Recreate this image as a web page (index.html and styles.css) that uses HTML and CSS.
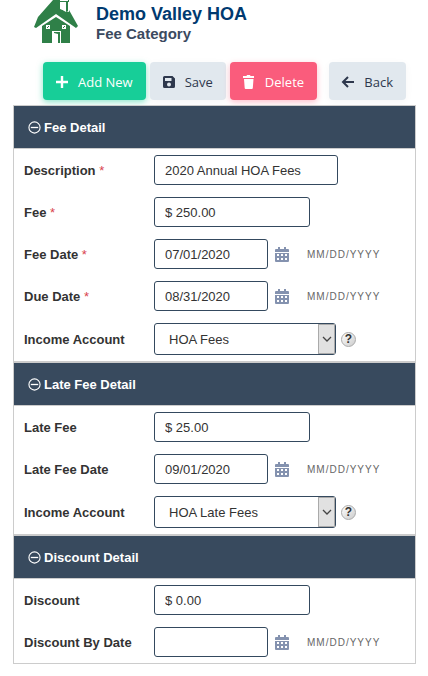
FILE: index.html
```html
<!DOCTYPE html>
<html lang="en">
<head>
    <meta charset="UTF-8">
    <meta name="viewport" content="width=device-width, initial-scale=1.0">
    <title>Fee Category - Demo Valley HOA</title>
    <link rel="stylesheet" href="styles.css">
</head>
<body>

    <!-- shared icons -->
    <svg class="sprite" aria-hidden="true">
        <symbol id="minus" viewBox="0 0 14 14">
            <circle cx="7" cy="7" r="6" fill="none" stroke="currentColor" stroke-width="1.2"/>
            <path d="M3 7h8" stroke="currentColor" stroke-width="1.4"/>
        </symbol>
        <symbol id="calendar" viewBox="0 0 14 15">
            <path fill="currentColor" fill-rule="evenodd" d="M3 0h2v2h4V0h2v2h2a1 1 0 0 1 1 1v2H0V3a1 1 0 0 1 1-1h2zM0 6h14v8a1 1 0 0 1-1 1H1a1 1 0 0 1-1-1zM2 7v2h2V7zM6 7v2h2V7zM10 7v2h2V7zM2 11v2h2v-2zM6 11v2h2v-2zM10 11v2h2v-2z"/>
        </symbol>
        <symbol id="chevron" viewBox="0 0 10 6">
            <path d="M1 1l4 4 4-4" fill="none" stroke="#444" stroke-width="1.3"/>
        </symbol>
    </svg>

    <header class="page-header">
        <svg class="logo" viewBox="0 0 44 43" aria-hidden="true">
            <path fill="#2f8048" d="M19 0h7v9l9 3V1h-1V0h1v10l9 16-2 2-20-14L2 28l-2-1 4-10z"/>
            <path fill="#fff" d="M27 2h5v10l-5-3z"/>
            <path fill="#2f8048" d="M26 1h9v1h-9zM32 1h2v10h-2zM22 17l14 9v17H27V31h-9v12H8V26z"/>
            <path fill="#fff" d="M12 25h4v4h-4zM28 25h4v4h-4zM18 31h9v12h-9z"/>
            <path fill="#2f8048" d="M20 32h6v11h-2v-9l-4-1zM14 26h1v1h-1zM13 27h1v1h-1zM30 26h1v1h-1zM29 27h1v1h-1z"/>
        </svg>
        <div>
            <h1>Demo Valley HOA</h1>
            <p>Fee Category</p>
        </div>
    </header>

    <div class="toolbar">
        <button type="button" class="btn btn-add">
            <svg viewBox="0 0 14 14"><path d="M7 1v12M1 7h12" stroke="currentColor" stroke-width="2.400"/></svg>
            Add New
        </button>
        <button type="button" class="btn">
            <svg viewBox="0 0 14 14"><path fill="currentColor" fill-rule="evenodd" d="M2.500 1h8L13 3.500v8a1.500 1.500 0 0 1-1.500 1.500h-9A1.500 1.500 0 0 1 1 11.500v-9A1.500 1.500 0 0 1 2.500 1zM3 3v3h6.500V3zM7 7.500a2 2 0 1 0 0 4 2 2 0 0 0 0-4z"/></svg>
            Save
        </button>
        <button type="button" class="btn btn-delete">
            <svg viewBox="0 0 14 14"><path fill="currentColor" d="M1 1h3.500l.5-1h3l.5 1H12v2H1zM2 4h9.500l-.7 9a1 1 0 0 1-1 1H3.700a1 1 0 0 1-1-1z"/></svg>
            Delete
        </button>
        <button type="button" class="btn btn-back">
            <svg viewBox="0 0 14 14"><path d="M7 2L2 7l5 5M2 7h11" fill="none" stroke="currentColor" stroke-width="2"/></svg>
            Back
        </button>
    </div>

    <form class="fee-form">
        <section>
            <h2><button type="button" class="toggle"><svg><use href="#minus"/></svg>Fee Detail</button></h2>
            <div class="rows">
                <div class="row">
                    <label for="description">Description <span class="required">*</span></label>
                    <input type="text" id="description" class="wide" value="2020 Annual HOA Fees">
                </div>
                <div class="row">
                    <label for="fee">Fee <span class="required">*</span></label>
                    <input type="text" id="fee" class="amount" value="$ 250.00">
                </div>
                <div class="row">
                    <label for="fee_date">Fee Date <span class="required">*</span></label>
                    <input type="text" id="fee_date" class="date" value="07/01/2020">
                    <button type="button" class="calendar" aria-label="Pick fee date"><svg><use href="#calendar"/></svg></button>
                    <span class="hint">MM/DD/YYYY</span>
                </div>
                <div class="row">
                    <label for="due_date">Due Date <span class="required">*</span></label>
                    <input type="text" id="due_date" class="date" value="08/31/2020">
                    <button type="button" class="calendar" aria-label="Pick due date"><svg><use href="#calendar"/></svg></button>
                    <span class="hint">MM/DD/YYYY</span>
                </div>
                <div class="row">
                    <label for="account">Income Account</label>
                    <div class="select">
                        <select id="account"><option>HOA Fees</option></select>
                        <span class="arrow"><svg><use href="#chevron"/></svg></span>
                    </div>
                    <button type="button" class="help" aria-label="Help">?</button>
                </div>
            </div>
        </section>

        <section>
            <h2><button type="button" class="toggle"><svg><use href="#minus"/></svg>Late Fee Detail</button></h2>
            <div class="rows">
                <div class="row">
                    <label for="late_fee">Late Fee</label>
                    <input type="text" id="late_fee" class="amount" value="$ 25.00">
                </div>
                <div class="row">
                    <label for="late_fee_date">Late Fee Date</label>
                    <input type="text" id="late_fee_date" class="date" value="09/01/2020">
                    <button type="button" class="calendar" aria-label="Pick late fee date"><svg><use href="#calendar"/></svg></button>
                    <span class="hint">MM/DD/YYYY</span>
                </div>
                <div class="row">
                    <label for="late_account">Income Account</label>
                    <div class="select">
                        <select id="late_account"><option>HOA Late Fees</option></select>
                        <span class="arrow"><svg><use href="#chevron"/></svg></span>
                    </div>
                    <button type="button" class="help" aria-label="Help">?</button>
                </div>
            </div>
        </section>

        <section>
            <h2><button type="button" class="toggle"><svg><use href="#minus"/></svg>Discount Detail</button></h2>
            <div class="rows">
                <div class="row">
                    <label for="discount">Discount</label>
                    <input type="text" id="discount" class="amount" value="$ 0.00">
                </div>
                <div class="row">
                    <label for="discount_date">Discount By Date</label>
                    <input type="text" id="discount_date" class="date">
                    <button type="button" class="calendar" aria-label="Pick discount date"><svg><use href="#calendar"/></svg></button>
                    <span class="hint">MM/DD/YYYY</span>
                </div>
            </div>
        </section>
    </form>

    <script>
        document.querySelectorAll('.toggle').forEach(el => {
            el.addEventListener('click', () => {
                el.closest('section').querySelector('.rows').classList.toggle('hidden');
            });
        });
    </script>

</body>
</html>
```
FILE: styles.css
```css
* {
    box-sizing: border-box;
}
body {
    margin: 0;
    padding: 0 12px 12px 13px;
    background: #fff;
    color: #333;
    font-family: "Liberation Sans", Arial, sans-serif;
    font-size: 13px;
}
h1, h2, p {
    margin: 0;
}
button, input, select {
    font: inherit;
    color: inherit;
    margin: 0;
}
button {
    padding: 0;
    border: none;
    background: none;
    cursor: pointer;
}
.sprite {
    display: none;
}
.page-header {
    display: flex;
    gap: 18px;
    padding-left: 21px;
}
.logo {
    width: 44px;
    height: 43px;
}
.page-header h1 {
    padding-top: 4px;
    font-size: 18px;
    line-height: 20px;
    color: #003a70;
}
.page-header p {
    font-size: 15px;
    line-height: 20px;
    font-weight: bold;
    color: #3b4a60;
}
.toolbar {
    display: flex;
    gap: 4px;
    padding: 18px 10px 5px 30px;
}
.btn {
    display: flex;
    align-items: center;
    gap: 9px;
    height: 38px;
    padding: 1px 13px 0 12px;
    border-radius: 4px;
    background: #e1e8ee;
    color: #2e384d;
    font-family: "Open Sans", sans-serif;
    font-size: 13px;
    box-shadow: 0 2px 8px rgba(0, 0, 0, 0.04);
}
.btn svg {
    width: 14px;
    height: 14px;
}
.btn-add {
    background: #17ce98;
    color: #fff;
    box-shadow: 0 2px 6px rgba(23, 206, 152, 0.5);
}
.btn-delete {
    background: #fa5c7c;
    color: #fff;
    box-shadow: 0 2px 6px rgba(250, 92, 124, 0.4);
}
.btn-back {
    margin-left: auto;
}
.fee-form {
    position: relative;
}
section {
    border: 1px solid #ccc;
}
section h2 {
    background: #384a5e;
    border-bottom: 1px solid #ccc;
}
.toggle {
    display: flex;
    align-items: center;
    gap: 3px;
    width: 100%;
    height: 42px;
    padding-left: 14px;
    color: #fff;
    font-size: 13px;
    font-weight: bold;
}
.toggle svg {
    width: 13px;
    height: 13px;
}
.hidden {
    display: none;
}
.row {
    display: flex;
    align-items: center;
    padding: 6px 10px;
}
.row label {
    width: 130px;
    font-weight: bold;
}
.required {
    color: #d9434e;
    font-weight: normal;
}
input, select {
    height: 30px;
    padding: 0 10px;
    border: 1px solid #34495e;
    border-radius: 3px;
    background: #fff;
}
.wide {
    width: 184px;
}
.amount {
    width: 156px;
}
.date {
    width: 114px;
}
.calendar {
    display: flex;
    margin: 0 18px 0 7px;
    color: #8492af;
}
.calendar svg {
    width: 14px;
    height: 15px;
}
.hint {
    font-size: 10px;
    letter-spacing: 1px;
    color: #666;
}
.select {
    position: relative;
    width: 182px;
}
.select select {
    width: 100%;
    height: 32px;
    padding: 0 24px 0 14px;
    appearance: none;
    display: block;
}
.arrow {
    position: absolute;
    top: 1px;
    right: 1px;
    bottom: 1px;
    display: flex;
    align-items: center;
    justify-content: center;
    width: 17px;
    border: 1px solid #aaa;
    background: #e1e1e1;
    pointer-events: none;
}
.arrow svg {
    width: 10px;
    height: 6px;
}
.help {
    width: 15px;
    height: 15px;
    margin-left: 5px;
    border: 1px solid #aaa;
    border-radius: 50%;
    background: linear-gradient(135deg, #fff, #ccc);
    font-size: 12px;
    line-height: 13px;
    font-weight: bold;
    text-align: center;
}
```
